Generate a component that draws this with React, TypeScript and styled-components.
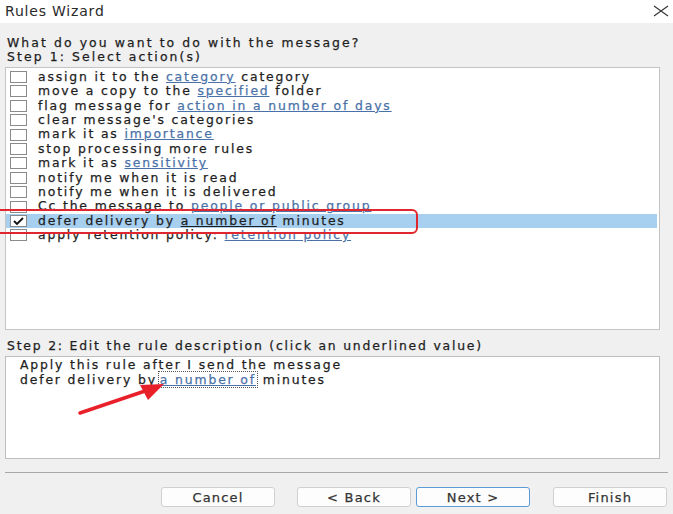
import styled, { createGlobalStyle } from "styled-components";

const GlobalStyle = createGlobalStyle`
  html, body {
    margin: 0;
    padding: 0;
    background: #f0f0f0;
  }
  body {
    font-family: "DejaVu Sans", "Liberation Sans", sans-serif;
    color: #1e1e1e;
    -webkit-text-stroke: 0.25px currentColor;
  }
`;

const Dialog = styled.div`
  width: 673px;
  height: 514px;
  display: flex;
  flex-direction: column;
  background: #f0f0f0;
  overflow: hidden;
`;

const TitleBar = styled.div`
  height: 23px;
  background: #fff;
  display: flex;
  align-items: center;
  justify-content: space-between;
  padding: 0 3px 2px 5px;
  box-sizing: border-box;
`;

const Title = styled.span`
  font-size: 14px;
  letter-spacing: 0.8px;
  color: #2a2a2a;
  -webkit-text-stroke: 0;
`;

const Body = styled.div`
  padding: 13px 13px 0 5px;
  display: flex;
  flex-direction: column;
`;

const Heading = styled.div<{ $spacing?: number; $gapTop?: number }>`
  font-size: 12.4px;
  line-height: 14.4px;
  padding-left: 2px;
  margin-top: ${(p) => p.$gapTop ?? 0}px;
  letter-spacing: ${(p) => p.$spacing ?? 2.1}px;
  white-space: nowrap;
`;

const ListBox = styled.div`
  position: relative;
  margin-top: 2px;
  height: 263px;
  box-sizing: border-box;
  border: 1px solid #c4c4c4;
  background: #fff;
  padding-top: 2px;
`;

const Row = styled.div<{ $selected?: boolean }>`
  height: 14.4px;
  line-height: 14.4px;
  display: flex;
  align-items: center;
  gap: 11px;
  padding-left: 4px;
  margin-right: 2px;
  background: ${(p) => (p.$selected ? "#a6cff0" : "transparent")};
  font-size: 12.4px;
  letter-spacing: 1.85px;
  white-space: nowrap;
`;

const Box = styled.span`
  flex: none;
  width: 15px;
  height: 10px;
  border: 1px solid #8a8a8a;
  background: #fff;
  display: flex;
  align-items: center;
  justify-content: center;
`;

const Link = styled.span<{ $plain?: boolean }>`
  color: ${(p) => (p.$plain ? "#1e1e1e" : "#4a72a8")};
  text-decoration: underline;
  text-underline-offset: 1px;
`;

const Callout = styled.div`
  position: absolute;
  left: -30px;
  top: 141px;
  width: 438px;
  height: 21px;
  border: 2px solid #e0262e;
  border-radius: 6px;
  pointer-events: none;
`;

const DescBox = styled.div`
  position: relative;
  margin-top: 3px;
  height: 103px;
  box-sizing: border-box;
  border: 1px solid #bdbdbd;
  background: #fff;
  padding: 0 0 0 14px;
  font-size: 12.4px;
  line-height: 15px;
  letter-spacing: 1.85px;
  white-space: nowrap;
`;

const ValueLink = styled.span`
  color: #4a72a8;
  text-decoration: underline;
  outline: 1px dotted #555;
  margin-left: 2px;
  padding: 0 1px;
`;

const Arrow = styled.svg`
  position: absolute;
  left: 70px;
  top: 25px;
  overflow: visible;
`;

const Separator = styled.div`
  margin: 13px -8px 0 0;
  height: 1px;
  background: #a8a8a8;
`;

const Buttons = styled.div`
  display: flex;
  justify-content: flex-end;
  margin: 14px -7px 0 0;
`;

const Button = styled.button<{ $primary?: boolean; $gap?: number }>`
  width: 114px;
  height: 20px;
  margin-left: ${(p) => p.$gap ?? 0}px;
  background: #fdfdfd;
  border: 1px solid ${(p) => (p.$primary ? "#5a9bd8" : "#d0d0d0")};
  border-radius: 3px;
  font-family: "DejaVu Sans", sans-serif;
  font-size: 13px;
  letter-spacing: 1.2px;
  color: #333;
  padding: 0;
  -webkit-text-stroke: 0.25px currentColor;
`;

type Part = string | { link: string };

const actions: Part[][] = [
  ["assign it to the ", { link: "category" }, " category"],
  ["move a copy to the ", { link: "specified" }, " folder"],
  ["flag message for ", { link: "action in a number of days" }],
  ["clear message's categories"],
  ["mark it as ", { link: "importance" }],
  ["stop processing more rules"],
  ["mark it as ", { link: "sensitivity" }],
  ["notify me when it is read"],
  ["notify me when it is delivered"],
  ["Cc the message to ", { link: "people or public group" }],
  ["defer delivery by ", { link: "a number of" }, " minutes"],
  ["apply retention policy: ", { link: "retention policy" }],
];

const SELECTED = 10;

export default function App() {
  return (
    <Dialog>
      <GlobalStyle />
      <TitleBar>
        <Title>Rules Wizard</Title>
        <svg width="18" height="12" viewBox="0 0 18 12">
          <path d="M2 1 L16 11 M16 1 L2 11" stroke="#333" strokeWidth="1.1" fill="none" />
        </svg>
      </TitleBar>
      <Body>
        <Heading>What do you want to do with the message?</Heading>
        <Heading>Step 1: Select action(s)</Heading>
        <ListBox>
          {actions.map((parts, i) => (
            <Row key={i} $selected={i === SELECTED}>
              <Box>
                {i === SELECTED && (
                  <svg width="11" height="8" viewBox="0 0 11 8">
                    <path d="M1 4 L4 7 L10 1" stroke="#111" strokeWidth="1.8" fill="none" />
                  </svg>
                )}
              </Box>
              <span>
                {parts.map((p, j) =>
                  typeof p === "string" ? (
                    <span key={j}>{p}</span>
                  ) : (
                    <Link key={j} $plain={i === SELECTED}>
                      {p.link}
                    </Link>
                  )
                )}
              </span>
            </Row>
          ))}
          <Callout />
        </ListBox>
        <Heading $spacing={1.8} $gapTop={9}>
          Step 2: Edit the rule description (click an underlined value)
        </Heading>
        <DescBox>
          <div>Apply this rule after I send the message</div>
          <div>
            defer delivery by<ValueLink>a number of</ValueLink> minutes
          </div>
          <Arrow width="90" height="34" viewBox="0 0 90 34">
            <path d="M4 31 L72 8" stroke="#e8202a" strokeWidth="3.5" strokeLinecap="round" />
            <path d="M88 2 L64 3 L72 18 Z" fill="#e8202a" />
          </Arrow>
        </DescBox>
        <Separator />
        <Buttons>
          <Button>Cancel</Button>
          <Button $gap={22}>&lt; Back</Button>
          <Button $gap={5} $primary>
            Next &gt;
          </Button>
          <Button $gap={23}>Finish</Button>
        </Buttons>
      </Body>
    </Dialog>
  );
}
